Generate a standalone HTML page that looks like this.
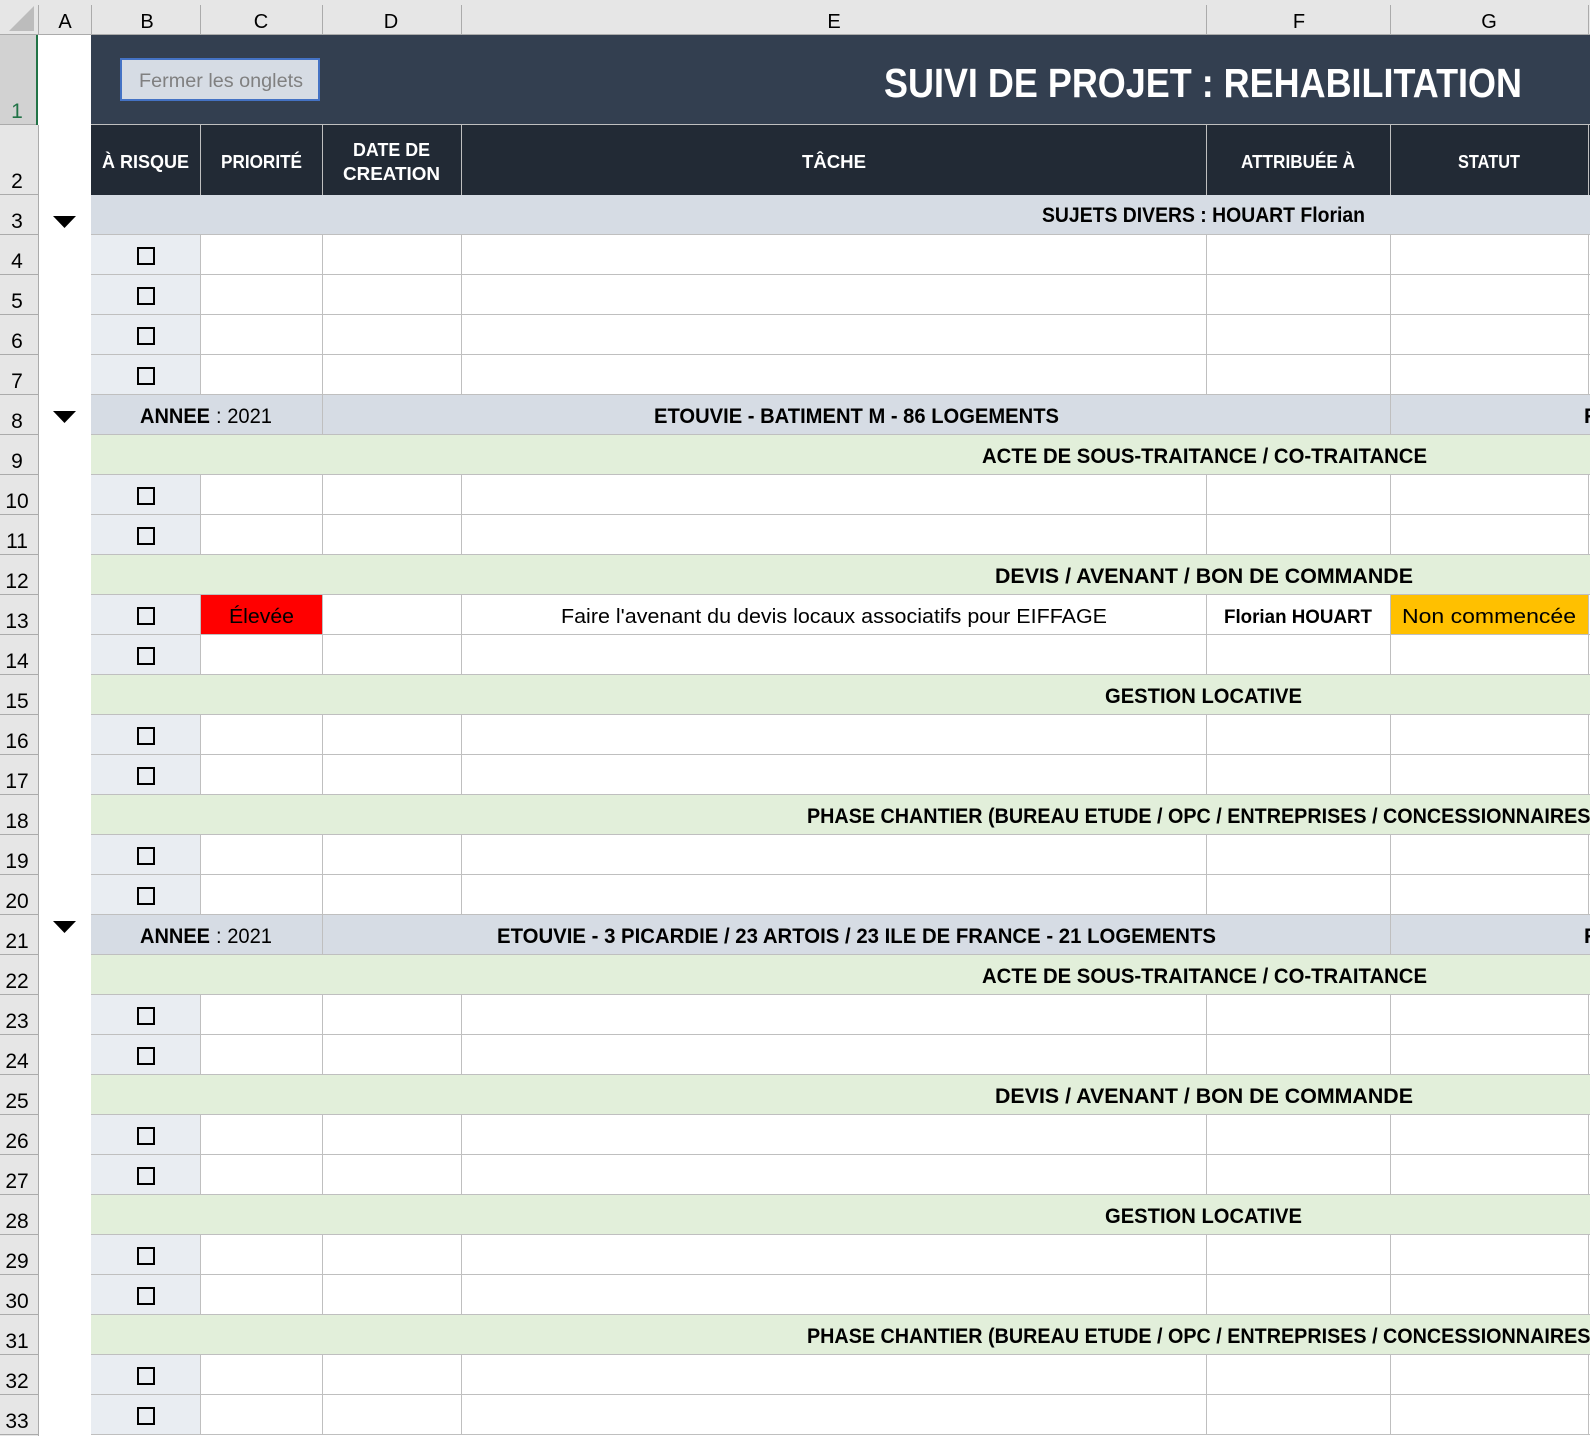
<!DOCTYPE html>
<html><head><meta charset="utf-8"><style>
html,body{margin:0;padding:0;background:#fff;}
svg{display:block;font-family:"Liberation Sans",sans-serif;}
</style></head><body>
<svg width="1590" height="1436" viewBox="0 0 1590 1436" xmlns="http://www.w3.org/2000/svg">
<defs>
<g id="nr">
<rect x="91" y="0" width="109" height="40" fill="#e9edf2"/>
<rect x="200" y="0" width="1390" height="40" fill="#fff"/>
<path d="M91 39.5H1590M200.5 0V40M322.5 0V40M461.5 0V40M1206.5 0V40M1390.5 0V40M1588.5 0V40" stroke="#bfbfbf" stroke-width="1" fill="none"/>
<rect x="138" y="13" width="16" height="16" fill="none" stroke="#000" stroke-width="2"/>
</g>
<g id="gb">
<rect x="91" y="0" width="1499" height="40" fill="#e2efda"/>
<path d="M91 39.5H1590" stroke="#bfbfbf"/>
</g>
<g id="yb">
<rect x="91" y="0" width="1499" height="40" fill="#d6dce4"/>
<path d="M91 39.5H1590M322.5 0V40M1390.5 0V40" stroke="#bfbfbf"/>
</g>
<path id="tri" d="M53 0H76L64.5 12Z" fill="#000"/>
</defs>

<rect x="0" y="0" width="1590" height="35" fill="#e6e6e6"/>
<path d="M0 34.5H1590M38.5 5V35M91.5 5V35M200.5 5V35M322.5 5V35M461.5 5V35M1206.5 5V35M1390.5 5V35M1588.5 5V35" stroke="#ababab"/>
<path d="M34 6V31H9Z" fill="#bcbcbc"/>
<g font-size="20" fill="#000" text-anchor="middle">
<text x="65" y="28">A</text><text x="147" y="28">B</text><text x="261" y="28">C</text><text x="391" y="28">D</text><text x="834" y="28">E</text><text x="1299" y="28">F</text><text x="1489" y="28">G</text>
</g>

<rect x="0" y="35" width="38" height="1401" fill="#e6e6e6"/>
<rect x="0" y="35" width="37" height="90" fill="#d2d2d2"/>
<path d="M0 124.5H38M0 194.5H38" stroke="#ababab"/>
<g stroke="#ababab">
<path d="M0 234.5H38M0 274.5H38M0 314.5H38M0 354.5H38M0 394.5H38M0 434.5H38M0 474.5H38M0 514.5H38M0 554.5H38M0 594.5H38M0 634.5H38M0 674.5H38M0 714.5H38M0 754.5H38M0 794.5H38M0 834.5H38M0 874.5H38M0 914.5H38M0 954.5H38M0 994.5H38M0 1034.5H38M0 1074.5H38M0 1114.5H38M0 1154.5H38M0 1194.5H38M0 1234.5H38M0 1274.5H38M0 1314.5H38M0 1354.5H38M0 1394.5H38M0 1434.5H38"/>
</g>
<path d="M38.5 125V1436" stroke="#ababab"/>
<rect x="36" y="35" width="2" height="90" fill="#217346"/>
<g font-size="21" fill="#000" text-anchor="middle">
<text x="17" y="118" fill="#217346">1</text><text x="17" y="188">2</text>
<text x="17" y="228">3</text><text x="17" y="268">4</text><text x="17" y="308">5</text><text x="17" y="348">6</text><text x="17" y="388">7</text><text x="17" y="428">8</text><text x="17" y="468">9</text><text x="17" y="508">10</text><text x="17" y="548">11</text><text x="17" y="588">12</text><text x="17" y="628">13</text><text x="17" y="668">14</text><text x="17" y="708">15</text><text x="17" y="748">16</text><text x="17" y="788">17</text><text x="17" y="828">18</text><text x="17" y="868">19</text><text x="17" y="908">20</text><text x="17" y="948">21</text><text x="17" y="988">22</text><text x="17" y="1028">23</text><text x="17" y="1068">24</text><text x="17" y="1108">25</text><text x="17" y="1148">26</text><text x="17" y="1188">27</text><text x="17" y="1228">28</text><text x="17" y="1268">29</text><text x="17" y="1308">30</text><text x="17" y="1348">31</text><text x="17" y="1388">32</text><text x="17" y="1428">33</text>
</g>

<rect x="91" y="35" width="1499" height="90" fill="#333f50"/>
<rect x="121" y="59" width="198" height="41" fill="#d6dce4" stroke="#4472c4" stroke-width="2"/>
<text x="139" y="87" font-size="19" fill="#808080" textLength="164" lengthAdjust="spacingAndGlyphs">Fermer les onglets</text>
<text x="884" y="97" font-size="41" font-weight="bold" fill="#fff" textLength="638" lengthAdjust="spacingAndGlyphs">SUIVI DE PROJET : REHABILITATION</text>

<rect x="91" y="125" width="1499" height="70" fill="#222a35"/>
<path d="M91 124.5H1590M200.5 125V195M322.5 125V195M461.5 125V195M1206.5 125V195M1390.5 125V195M1588.5 125V195" stroke="#bfbfbf"/>
<g font-size="18" font-weight="bold" fill="#fff">
<text x="102" y="168" textLength="87" lengthAdjust="spacingAndGlyphs">À RISQUE</text>
<text x="221" y="168" textLength="81" lengthAdjust="spacingAndGlyphs">PRIORITÉ</text>
<text x="353" y="156" textLength="77" lengthAdjust="spacingAndGlyphs">DATE DE</text>
<text x="343" y="180" textLength="97" lengthAdjust="spacingAndGlyphs">CREATION</text>
<text x="802" y="168" textLength="64" lengthAdjust="spacingAndGlyphs">TÂCHE</text>
<text x="1241" y="168" textLength="114" lengthAdjust="spacingAndGlyphs">ATTRIBUÉE À</text>
<text x="1458" y="168" textLength="62" lengthAdjust="spacingAndGlyphs">STATUT</text>
</g>

<rect x="91" y="195" width="1499" height="40" fill="#d6dce4"/>
<path d="M91 234.5H1590" stroke="#bfbfbf"/>
<use href="#nr" y="235"/><use href="#nr" y="275"/><use href="#nr" y="315"/><use href="#nr" y="355"/>
<use href="#yb" y="395"/>
<use href="#gb" y="435"/>
<use href="#nr" y="475"/><use href="#nr" y="515"/>
<use href="#gb" y="555"/>
<use href="#nr" y="595"/>
<rect x="201" y="595" width="121" height="39" fill="#ff0000"/>
<rect x="1391" y="595" width="197" height="39" fill="#ffc000"/>
<use href="#nr" y="635"/>
<use href="#gb" y="675"/>
<use href="#nr" y="715"/><use href="#nr" y="755"/>
<use href="#gb" y="795"/>
<use href="#nr" y="835"/><use href="#nr" y="875"/>
<use href="#yb" y="915"/>
<use href="#gb" y="955"/>
<use href="#nr" y="995"/><use href="#nr" y="1035"/>
<use href="#gb" y="1075"/>
<use href="#nr" y="1115"/><use href="#nr" y="1155"/>
<use href="#gb" y="1195"/>
<use href="#nr" y="1235"/><use href="#nr" y="1275"/>
<use href="#gb" y="1315"/>
<use href="#nr" y="1355"/><use href="#nr" y="1395"/>

<use href="#tri" y="216"/><use href="#tri" y="411"/><use href="#tri" y="921"/>

<g font-size="21" font-weight="bold" fill="#000">
<text x="1042" y="222" textLength="323" lengthAdjust="spacingAndGlyphs">SUJETS DIVERS : HOUART Florian</text>
<text x="140" y="423" textLength="70" lengthAdjust="spacingAndGlyphs">ANNEE</text>
<text x="216" y="423" font-weight="normal" textLength="56" lengthAdjust="spacingAndGlyphs">: 2021</text>
<text x="654" y="423" textLength="405" lengthAdjust="spacingAndGlyphs">ETOUVIE - BATIMENT M - 86 LOGEMENTS</text>
<text x="1584" y="423">F</text>
<text x="982" y="463" textLength="445" lengthAdjust="spacingAndGlyphs">ACTE DE SOUS-TRAITANCE / CO-TRAITANCE</text>
<text x="995" y="583" textLength="418" lengthAdjust="spacingAndGlyphs">DEVIS / AVENANT / BON DE COMMANDE</text>
<text x="1105" y="703" textLength="197" lengthAdjust="spacingAndGlyphs">GESTION LOCATIVE</text>
<text x="807" y="823" textLength="790" lengthAdjust="spacingAndGlyphs">PHASE CHANTIER (BUREAU ETUDE / OPC / ENTREPRISES / CONCESSIONNAIRES)</text>
<text x="140" y="943" textLength="70" lengthAdjust="spacingAndGlyphs">ANNEE</text>
<text x="216" y="943" font-weight="normal" textLength="56" lengthAdjust="spacingAndGlyphs">: 2021</text>
<text x="497" y="943" textLength="719" lengthAdjust="spacingAndGlyphs">ETOUVIE - 3 PICARDIE / 23 ARTOIS / 23 ILE DE FRANCE - 21 LOGEMENTS</text>
<text x="1584" y="943">F</text>
<text x="982" y="983" textLength="445" lengthAdjust="spacingAndGlyphs">ACTE DE SOUS-TRAITANCE / CO-TRAITANCE</text>
<text x="995" y="1103" textLength="418" lengthAdjust="spacingAndGlyphs">DEVIS / AVENANT / BON DE COMMANDE</text>
<text x="1105" y="1223" textLength="197" lengthAdjust="spacingAndGlyphs">GESTION LOCATIVE</text>
<text x="807" y="1343" textLength="790" lengthAdjust="spacingAndGlyphs">PHASE CHANTIER (BUREAU ETUDE / OPC / ENTREPRISES / CONCESSIONNAIRES)</text>
<text x="1224" y="623" font-size="19" textLength="148" lengthAdjust="spacingAndGlyphs">Florian HOUART</text>
</g>
<g font-size="20" fill="#000">
<text x="229" y="623" textLength="65" lengthAdjust="spacingAndGlyphs">Élevée</text>
<text x="561" y="623" textLength="546" lengthAdjust="spacingAndGlyphs">Faire l'avenant du devis locaux associatifs pour EIFFAGE</text>
<text x="1402" y="623" textLength="174" lengthAdjust="spacingAndGlyphs">Non commencée</text>
</g>
</svg>
</body></html>
